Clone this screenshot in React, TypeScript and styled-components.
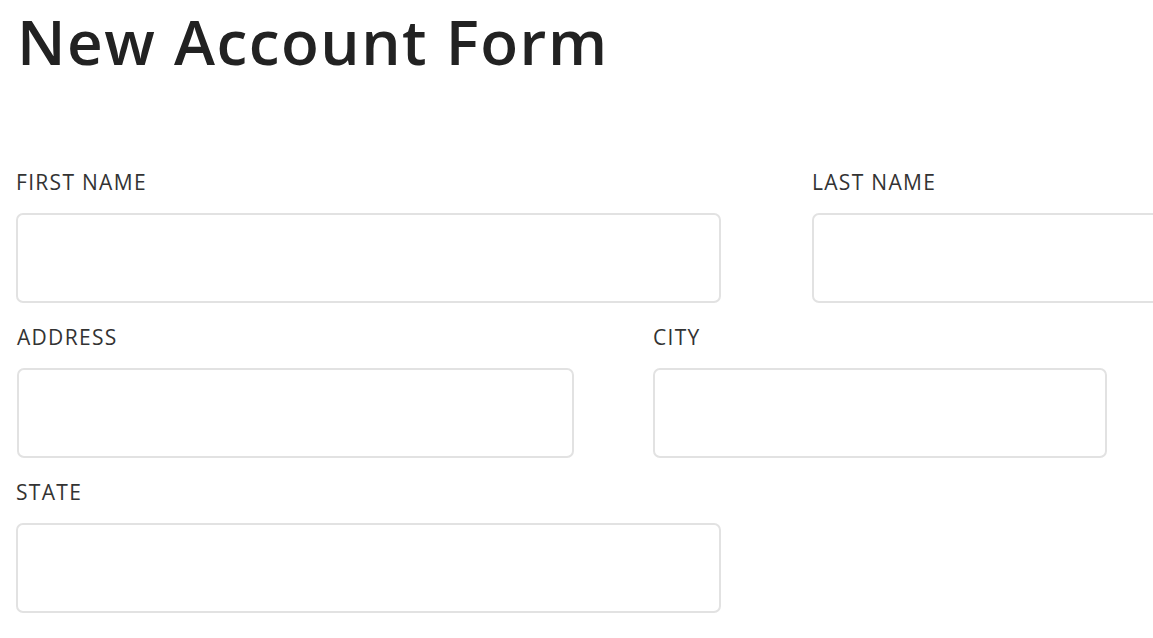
import React from "react";
import styled, { createGlobalStyle } from "styled-components";

const GlobalStyle = createGlobalStyle`
  html, body {
    margin: 0;
    padding: 0;
    background: #ffffff;
    font-family: "Open Sans", "Noto Sans", sans-serif;
    overflow: hidden;
  }
`;

const Page = styled.div`
  width: 1153px;
  height: 638px;
  padding-left: 16px;
  box-sizing: border-box;
  overflow: hidden;
`;

const Title = styled.h1`
  margin: 4px 0 0 1px;
  font-size: 62px;
  line-height: 74px;
  font-weight: 600;
  letter-spacing: 1.5px;
  color: #222222;
  white-space: nowrap;
`;

const Form = styled.form`
  margin-top: 90px;
  display: flex;
  flex-direction: column;
  gap: 20px;
`;

const Row = styled.div<{ $cols: string; $gap: number }>`
  display: grid;
  grid-template-columns: ${(p) => p.$cols};
  column-gap: ${(p) => p.$gap}px;
`;

const Field = styled.div<{ $offset?: number }>`
  display: flex;
  flex-direction: column;
  gap: 17px;
  margin-left: ${(p) => p.$offset ?? 0}px;
`;

const Label = styled.label`
  font-size: 21px;
  line-height: 28px;
  letter-spacing: 1.3px;
  color: #333333;
  white-space: nowrap;
`;

const Input = styled.input`
  height: 90px;
  box-sizing: border-box;
  border: 2px solid #e2e2e2;
  border-radius: 7px;
  background: #ffffff;
  font-family: inherit;
  font-size: 21px;
  padding: 0 14px;
  outline: none;
`;

export default function App() {
  return (
    <>
      <GlobalStyle />
      <Page>
        <Title>New Account Form</Title>
        <Form>
          <Row $cols="705px 705px" $gap={91}>
            <Field>
              <Label>FIRST NAME</Label>
              <Input type="text" />
            </Field>
            <Field>
              <Label>LAST NAME</Label>
              <Input type="text" />
            </Field>
          </Row>
          <Row $cols="558px 454px" $gap={79}>
            <Field $offset={1}>
              <Label>ADDRESS</Label>
              <Input type="text" />
            </Field>
            <Field>
              <Label>CITY</Label>
              <Input type="text" />
            </Field>
          </Row>
          <Row $cols="705px" $gap={0}>
            <Field>
              <Label>STATE</Label>
              <Input type="text" />
            </Field>
          </Row>
        </Form>
      </Page>
    </>
  );
}
